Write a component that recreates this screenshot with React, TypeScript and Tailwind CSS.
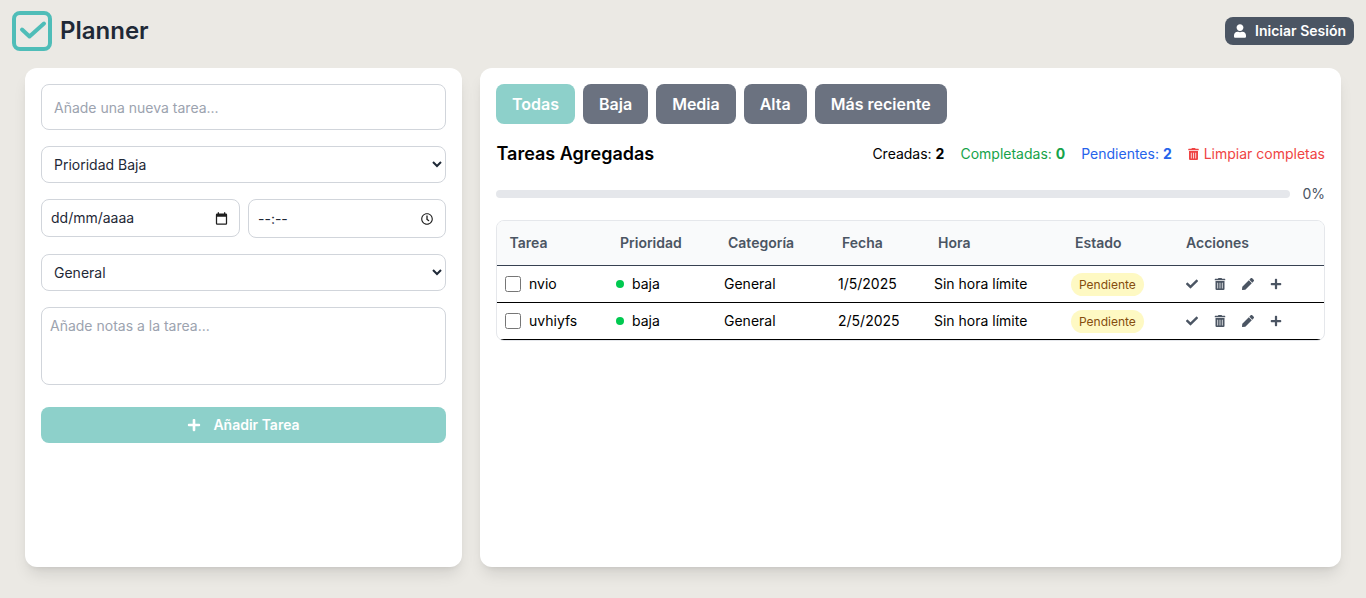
import { FaCheck, FaPen, FaPlus, FaRegClock, FaTrashAlt, FaUser } from 'react-icons/fa';

const filters = ['Baja', 'Media', 'Alta', 'Más reciente'];

const tasks = [
  { name: 'nvio', date: '1/5/2025' },
  { name: 'uvhiyfs', date: '2/5/2025' },
];

const headers = ['Tarea', 'Prioridad', 'Categoría', 'Fecha', 'Hora', 'Estado', 'Acciones'];

function Logo() {
  return (
    <svg viewBox="0 0 40 40" className="w-10 h-10 shrink-0 -mt-px" fill="none">
      <rect x="2" y="2" width="36" height="36" rx="6" stroke="#4fbdb8" strokeWidth="4" fill="#eceae6" />
      <path d="M10 18.5 L17.5 25.5 L32 12.5" stroke="#4fbdb8" strokeWidth="4" strokeLinecap="round" strokeLinejoin="round" />
    </svg>
  );
}

function CalendarIcon() {
  return (
    <svg viewBox="0 0 24 24" className="w-[15px] h-[15px]" fill="#1f1f1f">
      <path d="M19 4h-1V2h-2v2H8V2H6v2H5a2 2 0 0 0-2 2v14a2 2 0 0 0 2 2h14a2 2 0 0 0 2-2V6a2 2 0 0 0-2-2zm0 16H5V9h14v11z" />
    </svg>
  );
}

export default function App() {
  return (
    <div className="h-[598px] flex flex-col bg-[#ebe9e4] font-['Inter',sans-serif] text-sm overflow-hidden">
      {/* Header */}
      <header className="h-[68px] shrink-0 flex justify-between pl-3 pr-3 pt-3">
        <div className="flex items-start gap-2">
          <Logo />
          <h1 className="text-2xl font-semibold text-[#1f2937] leading-[38px]">Planner</h1>
        </div>
        <button className="h-7 mt-[5px] flex items-center gap-[9px] pl-[9px] pr-2 rounded-lg bg-[#4b5563] text-white font-semibold">
          <FaUser className="w-3 h-[14px]" />
          Iniciar Sesión
        </button>
      </header>

      <main className="flex gap-[18px] pl-[25px] pr-[25px] h-[499px]">
        {/* Form panel */}
        <section className="w-[437px] shrink-0 bg-white rounded-xl shadow-lg p-4 text-[#1f2937]">
          <input
            placeholder="Añade una nueva tarea..."
            className="w-full h-[46px] px-3 border border-[#d1d5db] rounded-lg placeholder:text-[#9ca3af] outline-none"
          />
          <select className="mt-4 w-full h-[37px] px-2 border border-[#d1d5db] rounded-lg outline-none bg-white">
            <option>Prioridad Baja</option>
          </select>
          <div className="mt-4 flex gap-2">
            <div className="w-[199px] h-[38px] flex items-center justify-between pl-[9px] pr-[10px] border border-[#d1d5db] rounded-lg">
              <span>dd/mm/aaaa</span>
              <CalendarIcon />
            </div>
            <div className="flex-1 h-[39px] flex items-center justify-between pl-[9px] pr-3 border border-[#d1d5db] rounded-lg">
              <span>--:--</span>
              <FaRegClock className="w-3 h-3 text-[#1f1f1f]" />
            </div>
          </div>
          <select className="mt-4 w-full h-[37px] px-2 border border-[#d1d5db] rounded-lg outline-none bg-white">
            <option>General</option>
          </select>
          <textarea
            placeholder="Añade notas a la tarea..."
            className="block mt-4 w-full h-[78px] px-2 py-2 border border-[#d1d5db] rounded-lg placeholder:text-[#9ca3af] outline-none resize-none"
          />
          <button className="mt-[22px] w-full h-9 flex items-center justify-center gap-3 rounded-lg bg-[#8dd0ca] text-white font-semibold">
            <FaPlus className="w-3.5 h-3.5" />
            Añadir Tarea
          </button>
        </section>

        {/* Task panel */}
        <section className="flex-1 bg-white rounded-xl shadow-lg p-4 text-black">
          <div className="flex gap-2">
            <button className="h-10 px-4 rounded-lg bg-[#8dd0ca] text-white text-base font-semibold">Todas</button>
            {filters.map((f) => (
              <button key={f} className="h-10 px-4 rounded-lg bg-[#6b7280] text-white text-base font-semibold">
                {f}
              </button>
            ))}
          </div>

          <div className="mt-[18px] flex items-center justify-between">
            <h2 className="ml-[0.5px] text-lg font-semibold leading-6">Tareas Agregadas</h2>
            <div className="flex items-center gap-4">
              <span>
                Creadas: <b className="font-bold">2</b>
              </span>
              <span className="text-[#16a34a]">
                Completadas: <b className="font-bold">0</b>
              </span>
              <span className="text-[#2563eb]">
                Pendientes: <b className="font-bold">2</b>
              </span>
              <span className="flex items-center gap-[5px] text-[#ef4444]">
                <FaTrashAlt className="w-[11px] h-3" />
                Limpiar completas
              </span>
            </div>
          </div>

          <div className="mt-[18px] flex items-center gap-3">
            <div className="flex-1 h-2 rounded-full bg-[#e5e7eb]" />
            <span className="text-[#4b5563]">0%</span>
          </div>

          <div className="mt-4 border border-[#e5e7eb] rounded-lg overflow-hidden">
            <table className="w-full table-fixed border-collapse">
              <colgroup>
                <col className="w-[111px]" />
                <col className="w-[108px]" />
                <col className="w-[114px]" />
                <col className="w-[96px]" />
                <col className="w-[137px]" />
                <col className="w-[111px]" />
                <col />
              </colgroup>
              <thead className="bg-[#f9fafb]">
                <tr className="h-[44px] border-b border-[#374151]">
                  {headers.map((h) => (
                    <th key={h} className="px-3 first:pl-[12.5px] text-left font-semibold text-[#4b5563]">
                      {h}
                    </th>
                  ))}
                </tr>
              </thead>
              <tbody>
                {tasks.map((t) => (
                  <tr key={t.name} className="h-[37px] border-b border-black">
                    <td className="pl-2 pr-0">
                      <div className="flex items-center gap-2">
                        <input type="checkbox" className="w-4 h-4 m-0" />
                        {t.name}
                      </div>
                    </td>
                    <td className="px-2">
                      <div className="flex items-center gap-2">
                        <span className="w-2 h-2 rounded-full bg-[#00c950]" />
                        baja
                      </div>
                    </td>
                    <td className="px-2">General</td>
                    <td className="px-2">{t.date}</td>
                    <td className="px-2">Sin hora límite</td>
                    <td className="px-2">
                      <span className="inline-block mt-px px-2 py-0.5 rounded-full bg-[#fef9c3] text-[#854d0e] text-xs leading-[19px]">
                        Pendiente
                      </span>
                    </td>
                    <td className="px-2">
                      <div className="ml-1 flex items-center gap-4 text-[#4b5563]">
                        <FaCheck className="w-3 h-3" />
                        <FaTrashAlt className="w-3 h-3" />
                        <FaPen className="w-3 h-3" />
                        <FaPlus className="w-3 h-3" />
                      </div>
                    </td>
                  </tr>
                ))}
              </tbody>
            </table>
          </div>
        </section>
      </main>
    </div>
  );
}
